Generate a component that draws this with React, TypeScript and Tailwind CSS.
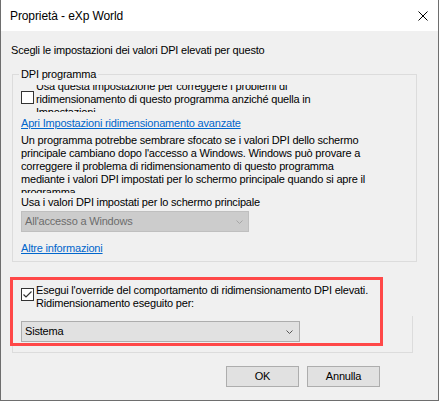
import React from "react";

function Chevron({ color }: { color: string }) {
  return (
    <svg width="7" height="4" viewBox="0 0 7 4" className="block">
      <polyline points="0.5,0.5 3.5,3.5 6.5,0.5" fill="none" stroke={color} strokeWidth="1" />
    </svg>
  );
}

export default function App() {
  return (
    <div className="w-[439px] h-[401px] bg-[#f0f0f0] border-l border-r border-b border-[#6e6e6e] flex flex-col font-['Liberation_Sans',Arial,sans-serif] text-[11px] leading-[13px] tracking-[-0.19px] text-black">
      {/* Title bar */}
      <div className="h-[31px] bg-white flex items-center justify-between pl-[9px] pr-[10px] shrink-0">
        <span className="text-[12px] leading-[14px] tracking-[-0.1px]">Proprietà - eXp World</span>
        <svg width="10" height="10" viewBox="0 0 10 10" className="block">
          <line x1="0.5" y1="0.5" x2="9.5" y2="9.5" stroke="#000" strokeWidth="1" />
          <line x1="9.5" y1="0.5" x2="0.5" y2="9.5" stroke="#000" strokeWidth="1" />
        </svg>
      </div>

      {/* Body */}
      <div className="flex-1 flex flex-col pt-[13px]">
        <div className="pl-[10px] whitespace-nowrap">Scegli le impostazioni dei valori DPI elevati per questo</div>

        {/* Group 1 */}
        <div className="relative mt-[17px] ml-[11px] w-[405px] border border-[#dcdcdc] pl-[8px] pt-[7px] pb-[6px]">
          <span className="absolute left-[6px] top-[-8px] bg-[#f0f0f0] px-[2px] leading-[14px]">DPI programma</span>

          <div className="flex items-start h-[30px]">
            <div className="mt-[9px] w-[13px] h-[13px] border border-[#333] bg-white shrink-0" />
            <div className="ml-[2px] mt-[3px] h-[27px] overflow-hidden">
              <div className="mt-[-5px] whitespace-nowrap">
                <div>Usa questa impostazione per correggere i problemi di</div>
                <div>ridimensionamento di questo programma anziché quella in</div>
                <div>Impostazioni</div>
              </div>
            </div>
          </div>

          <div className="mt-[5px] text-[#0066cc] underline whitespace-nowrap">Apri Impostazioni ridimensionamento avanzate</div>

          <div className="mt-[4px] h-[59px] overflow-hidden whitespace-nowrap">
            <div>Un programma potrebbe sembrare sfocato se i valori DPI dello schermo</div>
            <div>principale cambiano dopo l'accesso a Windows. Windows può provare a</div>
            <div>correggere il problema di ridimensionamento di questo programma</div>
            <div>mediante i valori DPI impostati per lo schermo principale quando si apre il</div>
            <div>programma.</div>
          </div>

          <div className="mt-[3px] whitespace-nowrap">Usa i valori DPI impostati per lo schermo principale</div>

          <div className="mt-[2px] w-[228px] h-[21px] bg-[#cccccc] border border-[#bfbfbf] flex items-center justify-between pl-[3px] pr-[5px]">
            <span className="text-[#6d6d6d]">All'accesso a Windows</span>
            <Chevron color="#a6a6a6" />
          </div>

          <div className="mt-[10px] text-[#0066cc] underline whitespace-nowrap">Altre informazioni</div>
        </div>

        {/* Group 2 */}
        <div className="relative mt-[15px] ml-[11px] w-[401px] h-[76px] border-l border-b border-[#dcdcdc] flex">
          <div className="flex-1 pl-[8px] pt-[7px]">
            <div className="flex items-start">
              <div className="mt-[4px] w-[13px] h-[13px] border border-[#333] bg-white shrink-0 flex items-center justify-center">
                <svg width="11" height="11" viewBox="0 0 11 11" className="block">
                  <polyline points="1.5,5.5 4,8 9.5,2.5" fill="none" stroke="#333" strokeWidth="1.2" />
                </svg>
              </div>
              <div className="ml-[2px] whitespace-nowrap">
                <div>Esegui l'override del comportamento di ridimensionamento DPI elevati.</div>
                <div>Ridimensionamento eseguito per:</div>
              </div>
            </div>
            <div className="mt-[11px] w-[279px] h-[21px] bg-[#e1e1e1] border border-[#adadad] flex items-center justify-between pl-[3px] pr-[6px]">
              <span>Sistema</span>
              <Chevron color="#555" />
            </div>
          </div>
          <div className="w-px mt-[39px] bg-[#dcdcdc]" />
          <div className="absolute left-[-3px] top-0 w-[373px] h-[69px] border-[3px] border-[#ff4848]" />
        </div>

        {/* Buttons */}
        <div className="mt-[13px] flex justify-end gap-[8px] pr-[58px]">
          <div className="w-[73px] h-[21px] bg-[#e1e1e1] border border-[#adadad] flex items-center justify-center">OK</div>
          <div className="w-[73px] h-[21px] bg-[#e1e1e1] border border-[#adadad] flex items-center justify-center">Annulla</div>
        </div>
      </div>
    </div>
  );
}
